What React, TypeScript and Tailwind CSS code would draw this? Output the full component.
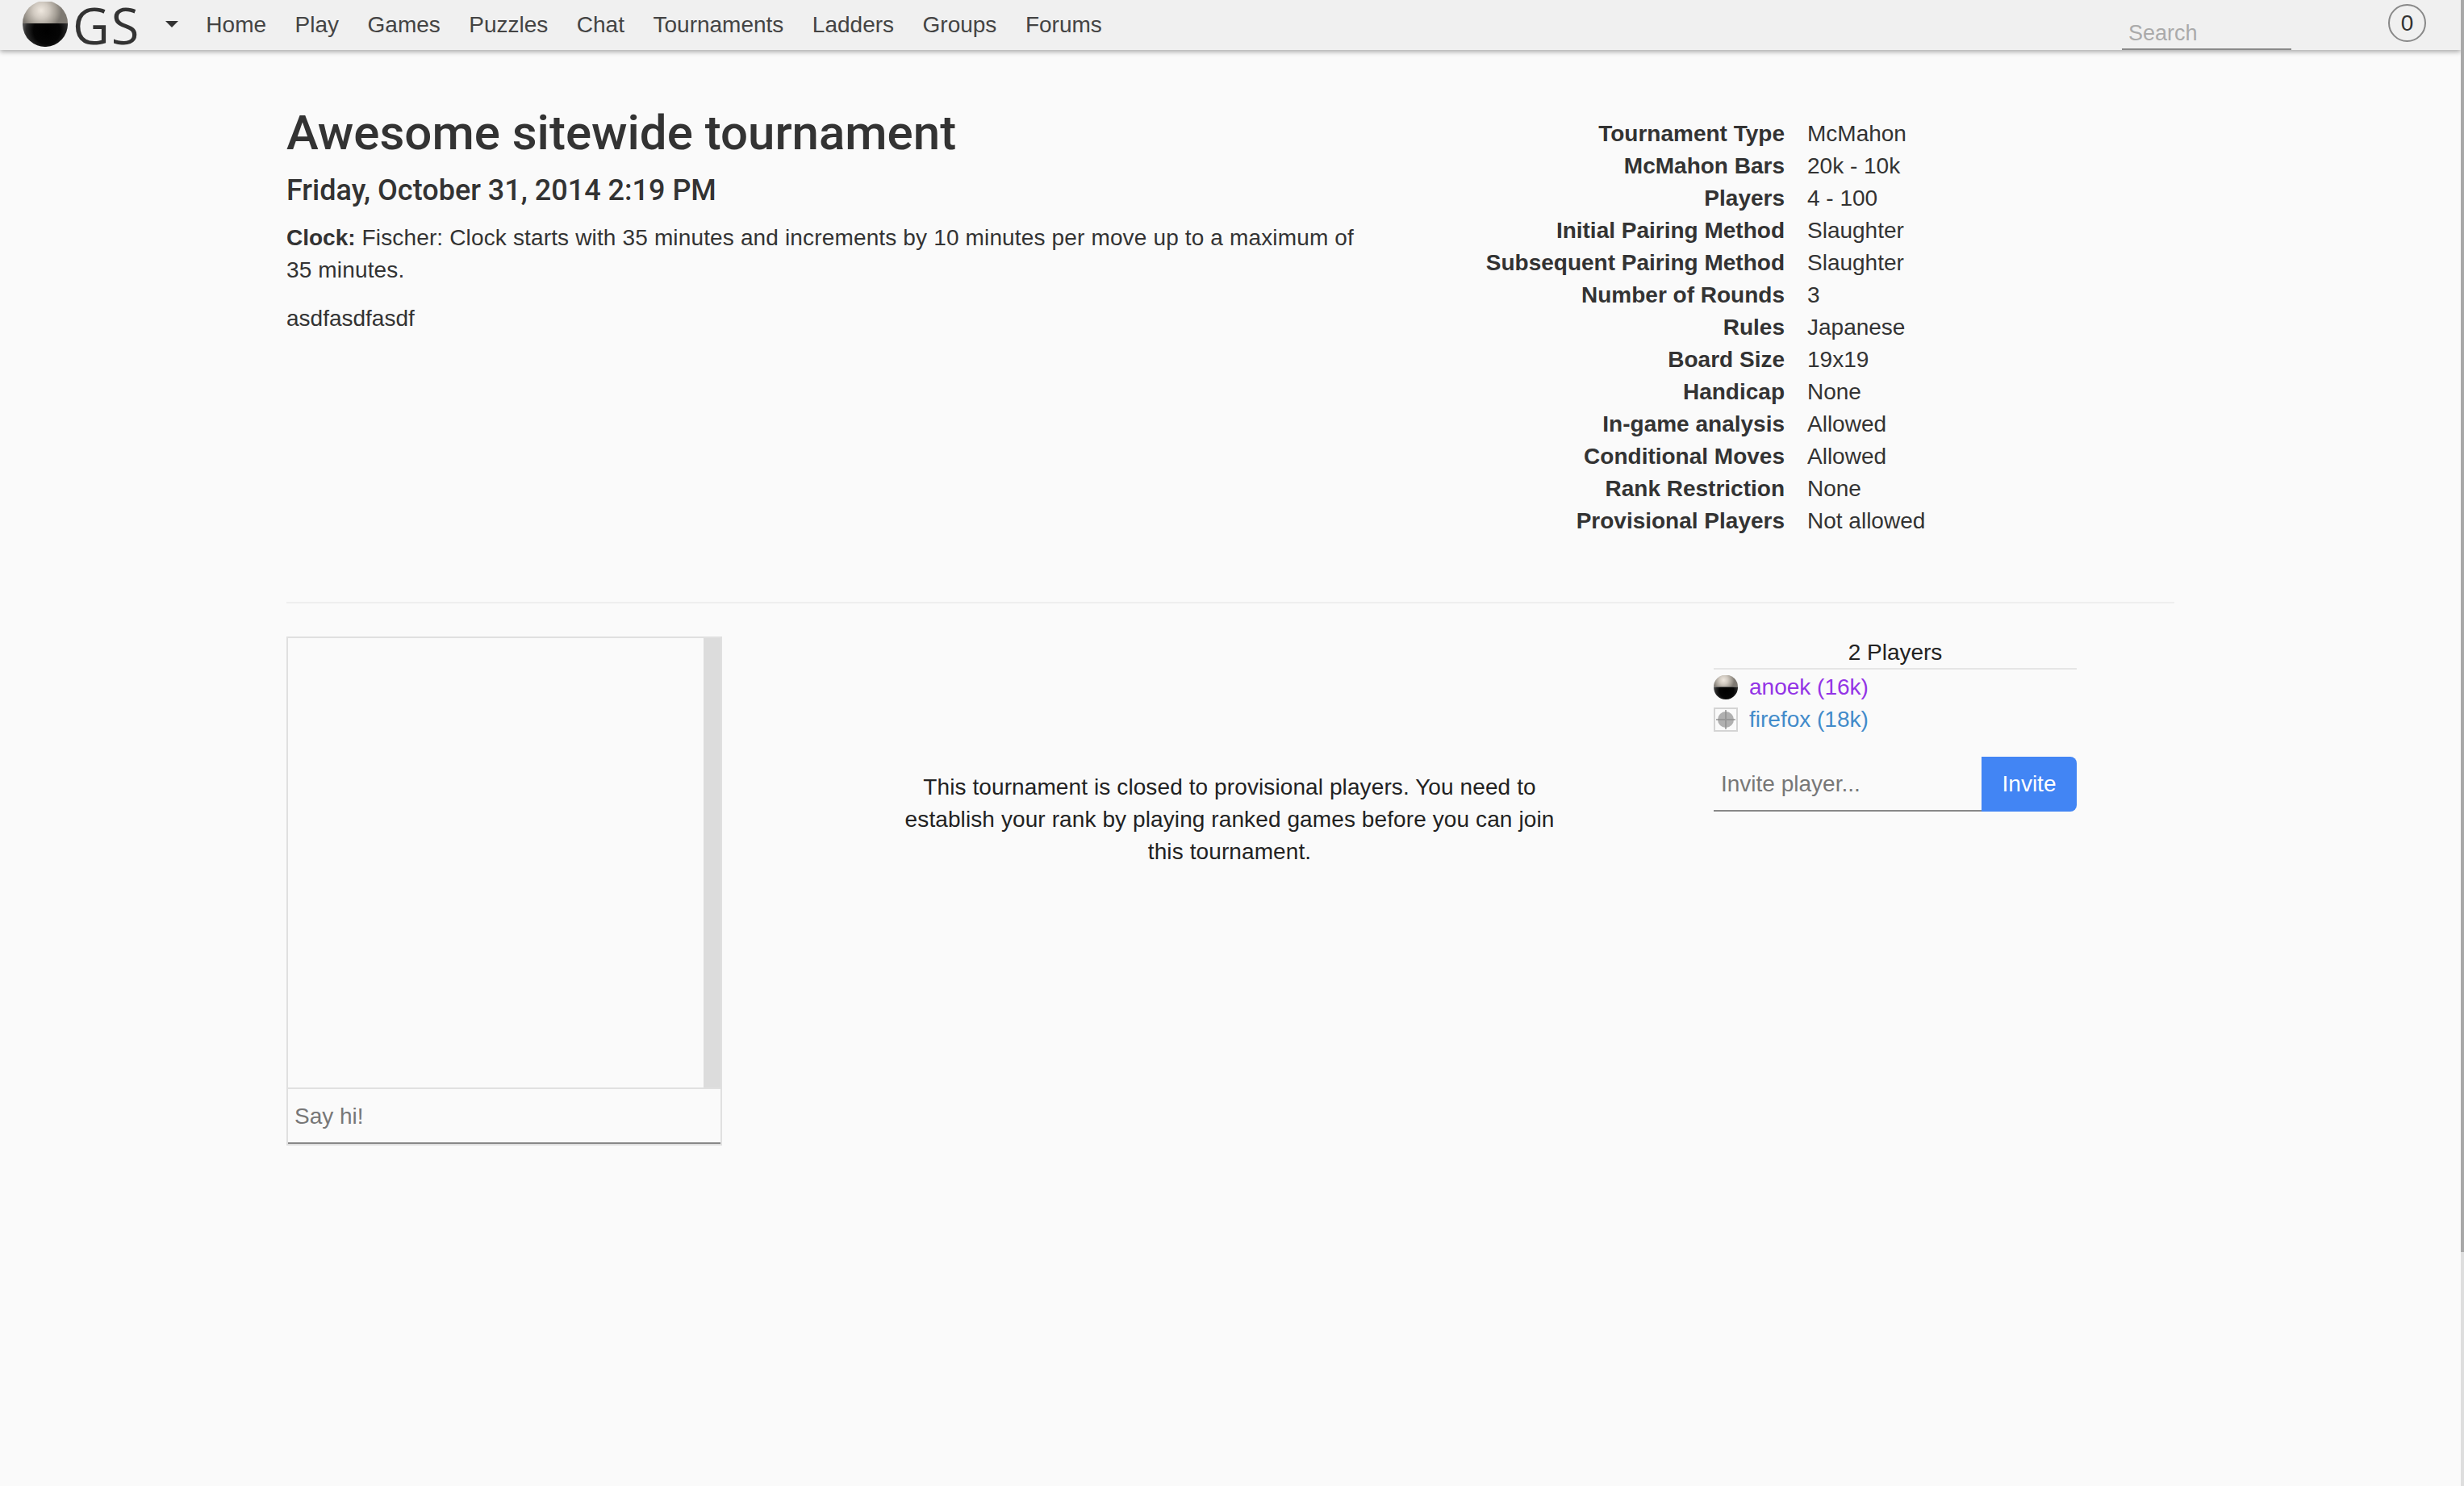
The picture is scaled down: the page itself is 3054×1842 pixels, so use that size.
const body = "font-['Liberation_Sans',Arial,sans-serif]";

const navLinks = ["Home", "Play", "Games", "Puzzles", "Chat", "Tournaments", "Ladders", "Groups", "Forums"];

const details = [
  ["Tournament Type", "McMahon"],
  ["McMahon Bars", "20k - 10k"],
  ["Players", "4 - 100"],
  ["Initial Pairing Method", "Slaughter"],
  ["Subsequent Pairing Method", "Slaughter"],
  ["Number of Rounds", "3"],
  ["Rules", "Japanese"],
  ["Board Size", "19x19"],
  ["Handicap", "None"],
  ["In-game analysis", "Allowed"],
  ["Conditional Moves", "Allowed"],
  ["Rank Restriction", "None"],
  ["Provisional Players", "Not allowed"],
];

const Stone = ({ size, id }: { size: number; id: string }) => (
  <svg width={size} height={size} viewBox="0 0 56 56" className="shrink-0">
    <defs>
      <radialGradient id={`${id}-top`} gradientUnits="userSpaceOnUse" cx="23" cy="11" r="25">
        <stop offset="0" stopColor="#efe8df" />
        <stop offset="0.4" stopColor="#d0c9c0" />
        <stop offset="0.75" stopColor="#a49e95" />
        <stop offset="1" stopColor="#7e7972" />
      </radialGradient>
      <radialGradient id={`${id}-bottom`} gradientUnits="userSpaceOnUse" cx="30" cy="36" r="30">
        <stop offset="0" stopColor="#000000" />
        <stop offset="0.55" stopColor="#050505" />
        <stop offset="0.85" stopColor="#2a2a2a" />
        <stop offset="1" stopColor="#585858" />
      </radialGradient>
    </defs>
    <path d="M0 27a28 28 0 0 1 56 0z" fill={`url(#${id}-top)`} />
    <path d="M0 27h56a28 28 0 0 1-56 2z" fill={`url(#${id}-bottom)`} />
  </svg>
);

const FirefoxIcon = () => (
  <svg width="30" height="30" viewBox="0 0 30 30" className="shrink-0">
    <rect x="1" y="1" width="28" height="28" fill="#fafafa" stroke="#d4d4d4" strokeWidth="2" />
    <circle cx="15" cy="15" r="10" fill="#b0b0b0" />
    <path d="M15 3v24M3 15h24" stroke="#8e8e8e" strokeWidth="2" opacity="0.7" />
  </svg>
);

export default function App() {
  return (
    <div className={`flex h-[1842px] bg-[#fafafa] text-[28px] leading-[40px] text-[#333] ${body}`}>
      <div className="min-w-0 flex-1">
        <nav className="flex h-[62px] items-center bg-[#f0f0f0] shadow-[0_2px_6px_rgba(0,0,0,0.35)]">
          <div className="ml-[28px] mt-[-2px]">
            <Stone size={56} id="logo-stone" />
          </div>
          <span className="ml-[6px] text-[63px] leading-[60px] tracking-[2px] text-[#333] font-['Open_Sans',sans-serif]">
            GS
          </span>
          <span className="ml-[31px] mt-[-2px] h-0 w-0 border-x-[8px] border-t-[8px] border-x-transparent border-t-[#333]" />
          <div className="ml-[34px] flex gap-[35.5px] text-[#444]">
            {navLinks.map((label) => (
              <a key={label}>{label}</a>
            ))}
          </div>
          <div className="ml-auto flex h-full items-start">
            <div className="mr-[120px] flex h-[62px] w-[210px] items-end border-b-2 border-[#8a8a8a] pl-[8px] text-[27px] leading-[38px] text-[#aaa]">
              Search
            </div>
            <div className="mr-[43px] mt-[5px] flex size-[47px] items-center justify-center rounded-full border-2 border-[#888] text-[28px]">
              0
            </div>
          </div>
        </nav>

        <main className="mx-[355px]">
          <section className="flex h-[686px] border-b-2 border-[#eeeeee]">
            <div className="w-[1340px]">
              <h1 className="mt-[70px] text-[60px] leading-[66px] font-medium font-['Roboto',sans-serif]">
                Awesome sitewide tournament
              </h1>
              <h2 className="mt-[18px] text-[36px] leading-[40px] font-medium font-['Roboto',sans-serif]">
                Friday, October 31, 2014 2:19 PM
              </h2>
              <p className="mt-[19px] tracking-[0.15px]">
                <b className="tracking-normal">Clock:</b> Fischer: Clock starts with 35 minutes and increments by 10
                minutes per move up to a maximum of 35 minutes.
              </p>
              <p className="mt-[20px]">asdfasdfasdf</p>
            </div>
            <div className="mt-[84px] grid h-fit flex-1 grid-cols-[517px_1fr] gap-x-[28px]">
              {details.map(([k, v]) => (
                <div key={k} className="contents">
                  <b className="text-right">{k}</b>
                  <span>{v}</span>
                </div>
              ))}
            </div>
          </section>

          <section className="mt-[41px] flex items-start">
            <div className="flex h-[631px] w-[540px] flex-col border-2 border-[#e0e0e0]">
              <div className="flex min-h-0 flex-1 justify-end border-b-2 border-[#e0e0e0]">
                <div className="w-[21px] bg-[#dcdcdc]" />
              </div>
              <div className="flex h-[68px] items-center border-b-2 border-[#888] pl-[8px] pt-[2px] text-[#777]">
                Say hi!
              </div>
            </div>

            <p className="ml-[219px] mt-[167px] w-[820px] text-center tracking-[0.1px] text-[#222]">
              This tournament is closed to provisional players. You need to establish your rank by playing ranked
              games before you can join this tournament.
            </p>

            <div className="ml-[190px] w-[450px]">
              <div className="border-b-2 border-[#e5e5e5] text-center leading-[39px] text-[#222]">2 Players</div>
              <div className="mt-[2px] flex h-[40px] items-center gap-[14px] text-[#9334e6]">
                <Stone size={30} id="anoek-stone" />
                anoek (16k)
              </div>
              <div className="flex h-[40px] items-center gap-[14px] text-[#428bca]">
                <FirefoxIcon />
                firefox (18k)
              </div>
              <div className="mt-[26px] flex h-[68px]">
                <div className="flex flex-1 items-center border-b-2 border-[#888] pl-[9px] pt-[2px] text-[#777]">
                  Invite player...
                </div>
                <button className="w-[118px] rounded-r-[8px] bg-[#4285f4] text-white">Invite</button>
              </div>
            </div>
          </section>
        </main>
      </div>
      <div className="flex w-[4px] flex-col bg-[#dedede]">
        <div className="h-[1552px] bg-[#a8a8a8]" />
      </div>
    </div>
  );
}
